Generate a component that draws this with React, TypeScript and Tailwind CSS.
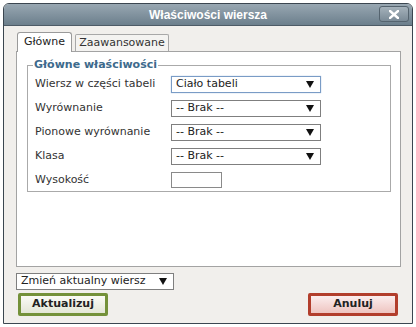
import React from "react";

const Arrow = () => (
  <svg width="8" height="7" viewBox="0 0 8 7" className="shrink-0">
    <path d="M0 0 H8 L4 7 Z" fill="#111" />
  </svg>
);

function Select({ text, w, focus }: { text: string; w: string; focus?: boolean }) {
  return (
    <div
      className={`flex items-center justify-between h-[17px] bg-white pl-[4px] pr-[6px] text-[11px] text-[#222] ${w} ${
        focus ? "border border-[#7a9cc6] shadow-[0_0_1px_#9bb7dc]" : "border border-[#7f7f7f]"
      }`}
    >
      <span>{text}</span>
      <Arrow />
    </div>
  );
}

export default function App() {
  const rows: { label: string; el: React.ReactNode }[] = [
    { label: "Wiersz w części tabeli", el: <Select text="Ciało tabeli" w="w-[150px]" focus /> },
    { label: "Wyrównanie", el: <Select text="-- Brak --" w="w-[150px]" /> },
    { label: "Pionowe wyrównanie", el: <Select text="-- Brak --" w="w-[150px]" /> },
    { label: "Klasa", el: <Select text="-- Brak --" w="w-[150px]" /> },
    { label: "Wysokość", el: <div className="w-[51px] h-[16px] border border-[#8a8a8a] bg-white" /> },
  ];
  return (
    <div className="w-[416px] h-[327px] bg-white pt-[3px] pl-[3px]" style={{ fontFamily: '"DejaVu Sans", Verdana, sans-serif' }}>
      <div className="w-[410px] h-[321px] rounded-t-[6px] border border-[#3b4650] bg-[#f1efec] flex flex-col overflow-hidden">
        <div className="relative h-[22px] shrink-0 bg-gradient-to-b from-[#98a7b2] to-[#6c7f8c] border-b border-[#4d5b66] flex items-center justify-center">
          <span className="text-white font-bold text-[12px]" style={{ fontFamily: '"Liberation Sans", Arial, sans-serif' }}>
            Właściwości wiersza
          </span>
          <div className="absolute right-[3px] top-[2px] w-[30px] h-[16px] rounded-[3px] border border-[#55646f] bg-gradient-to-b from-[#a5b2bb] to-[#7a8a96] flex items-center justify-center">
            <svg width="10" height="9" viewBox="0 0 10 9">
              <path d="M1 1 L9 8 M9 1 L1 8" stroke="white" strokeWidth="2.4" strokeLinecap="square" />
            </svg>
          </div>
        </div>
        <div className="flex-1 flex flex-col px-[12px] pt-[6px]">
          <div className="flex items-end gap-[3px] h-[19px] pl-[1px] relative z-10">
            <div className="h-[20px] w-[55px] bg-white border border-[#9a9a9a] border-b-0 rounded-t-[3px] flex items-center justify-center text-[11px] text-[#222] mb-[-1px]">
              Główne
            </div>
            <div className="h-[17px] w-[94px] bg-[#f4f3f1] border border-[#a8a8a8] border-b-0 rounded-t-[2px] flex items-center justify-center text-[11px] text-[#333]">
              Zaawansowane
            </div>
          </div>
          <div className="w-[385px] h-[216px] bg-white border border-[#a3a3a3] pt-[5px] px-[10px]">
            <fieldset className="border border-[#aaaaaa] w-[364px] h-[135px] px-[7px] pb-0 m-0">
              <legend className="text-[11px] font-bold text-[#3d6a8c] px-[1px] ml-[-2px]">Główne właściwości</legend>
              <div className="flex flex-col gap-[7px] mt-[2px]">
                {rows.map((r) => (
                  <div key={r.label} className="flex items-center h-[17px]">
                    <span className="w-[136px] text-[11px] text-[#333]">{r.label}</span>
                    {r.el}
                  </div>
                ))}
              </div>
            </fieldset>
          </div>
          <div className="mt-[6px]">
            <Select text="Zmień aktualny wiersz" w="w-[158px]" />
          </div>
          <div className="flex justify-between mt-[3px] pl-[2px] pr-[2px]">
            <button className="w-[90px] h-[23px] border-[3px] border-[#74913a] rounded-[2px] bg-gradient-to-b from-[#fbfbf6] to-[#e3e6d6] text-[11px] font-bold text-[#222]">
              Aktualizuj
            </button>
            <button className="w-[90px] h-[23px] border-[3px] border-[#b23e2c] rounded-[2px] bg-gradient-to-b from-[#fbeeee] to-[#eec4c0] text-[11px] font-bold text-[#222]">
              Anuluj
            </button>
          </div>
        </div>
      </div>
    </div>
  );
}
